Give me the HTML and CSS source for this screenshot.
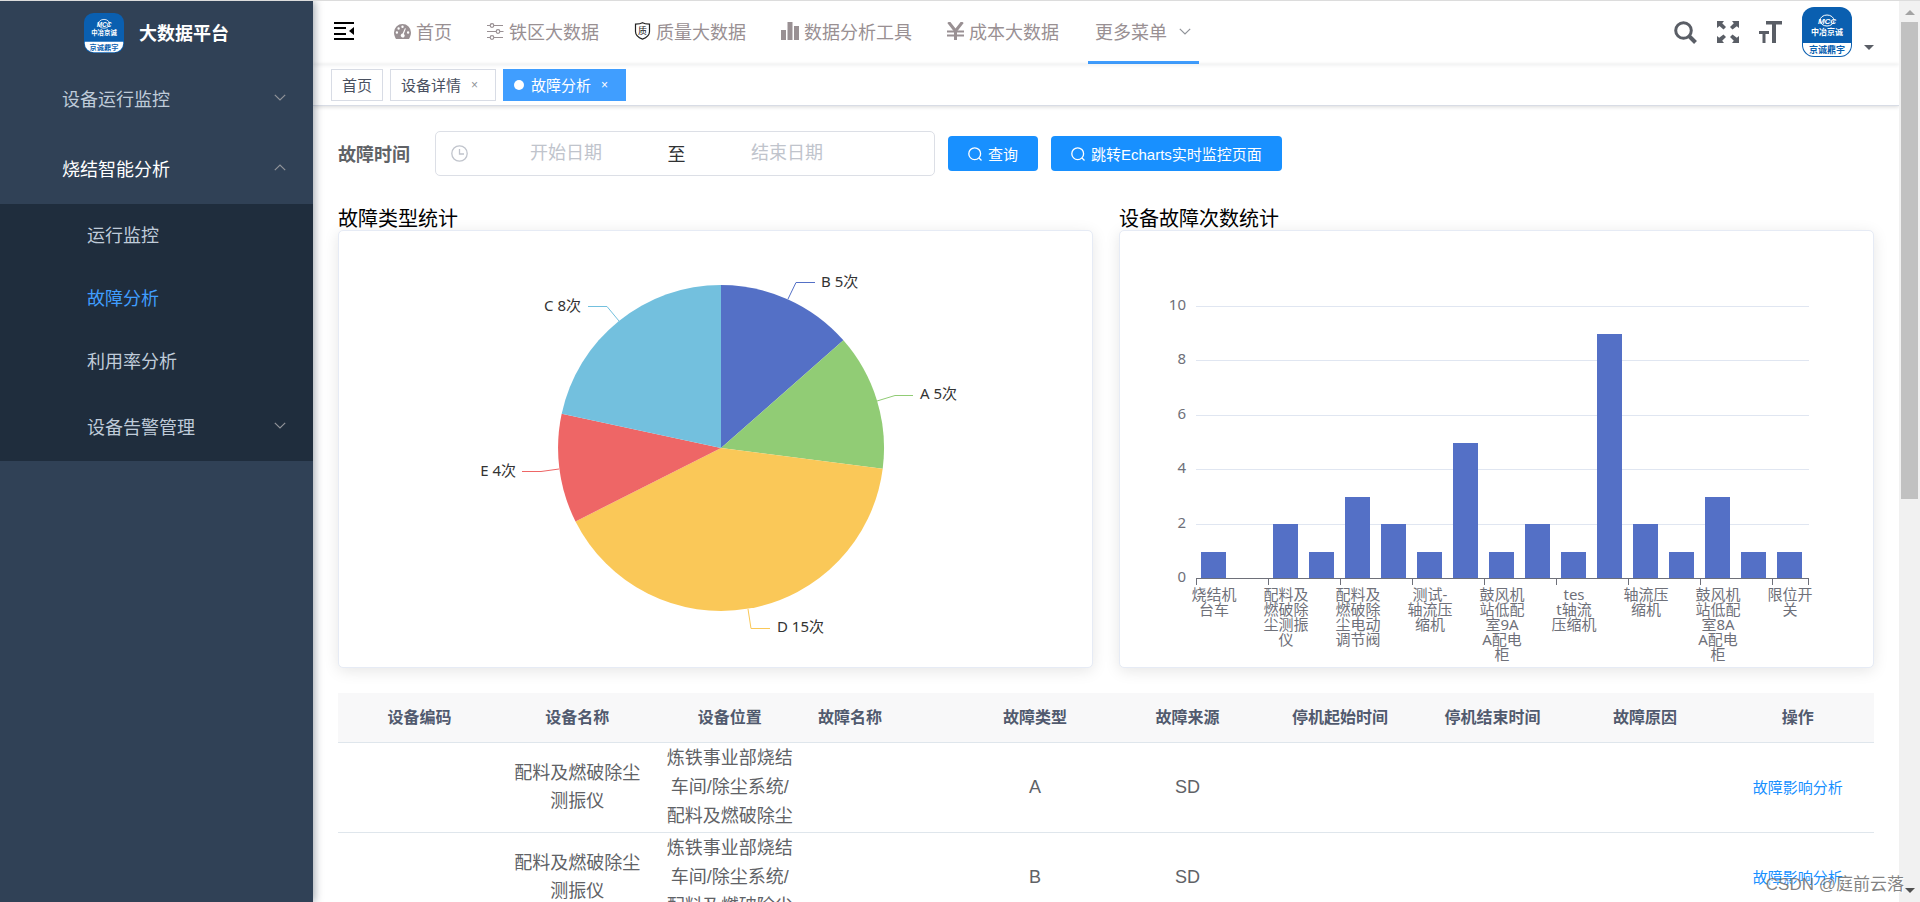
FILE: index.html
```html
<!DOCTYPE html>
<html lang="zh-CN">
<head>
<meta charset="utf-8">
<title>大数据平台</title>
<link rel="stylesheet" href="styles.css">
</head>
<body>
<svg class="defs" aria-hidden="true">
  <symbol id="brand" viewBox="0 0 50 50">
    <rect width="50" height="50" rx="12" fill="#0a5fb0"/>
    <path d="M1 36h48v2a11 11 0 0 1-11 11H12A11 11 0 0 1 1 38z" fill="#fff"/>
    <ellipse cx="25" cy="13.500" rx="7" ry="5.500" fill="none" stroke="#fff" stroke-width="1"/>
    <text class="brand-mcc" x="25" y="17" fill="#fff">MCC</text>
    <text class="brand-name" x="25" y="28" fill="#fff">中冶京诚</text>
    <text class="brand-sub" x="25" y="46" fill="#0a5fb0">京诚鼎宇</text>
  </symbol>
  <symbol id="down" viewBox="0 0 12 7"><path d="M.8.8 6 6 11.200.8" fill="none" stroke="currentColor" stroke-width="1.200"/></symbol>
  <symbol id="lens" viewBox="0 0 14 14"><circle cx="6.700" cy="6.700" r="5.900" fill="none" stroke="currentColor" stroke-width="1.300"/><path d="m11 11 2.500 2.500" stroke="currentColor" stroke-width="1.300"/></symbol>
</svg>
<div class="app">
  <aside class="sidebar">
    <div class="brand"><svg class="brand-logo"><use href="#brand"/></svg><h1 class="brand-title">大数据平台</h1></div>
    <nav>
      <button class="menu-title">设备运行监控<svg class="arrow"><use href="#down"/></svg></button>
      <button class="menu-title is-open">烧结智能分析<svg class="arrow up"><use href="#down"/></svg></button>
      <div class="submenu">
        <a class="menu-item" href="#">运行监控</a>
        <a class="menu-item is-active" href="#">故障分析</a>
        <a class="menu-item" href="#">利用率分析</a>
        <button class="menu-title nested">设备告警管理<svg class="arrow"><use href="#down"/></svg></button>
      </div>
    </nav>
  </aside>
  <div class="main">
    <header class="navbar">
      <button class="icon-button fold" aria-label="收起菜单">
        <svg width="20" height="18" viewBox="0 0 20 18"><path d="M0 1h20M0 6h12M0 12h12M0 17h20" stroke="#000" stroke-width="2"/><path d="M20 5v8l-5-4z"/></svg>
      </button>
      <nav class="topmenu">
        <a class="top-item" href="#"><svg width="17" height="15" viewBox="0 0 17 15"><path fill-rule="evenodd" fill="currentColor" d="M8.500 0A8.500 8.500 0 0 0 0 8.500c0 2.300.8 4.500 2 6.500h13c1.200-2 2-4.200 2-6.500A8.500 8.500 0 0 0 8.500 0zM2.900 7.300a1.200 1.200 0 1 1 0 2.400 1.200 1.200 0 0 1 0-2.400zM4.600 3.300a1.200 1.200 0 1 1 0 2.400 1.200 1.200 0 0 1 0-2.400zM8.500 1.600a1.200 1.200 0 1 1 0 2.400 1.200 1.200 0 0 1 0-2.400zM10.900 4.200l1 .4-2.100 5.300a2 2 0 1 1-1.200-.3zM14.100 7.300a1.200 1.200 0 1 1 0 2.400 1.200 1.200 0 0 1 0-2.400z"/></svg>首页</a>
        <a class="top-item" href="#"><svg width="17" height="17" viewBox="0 0 17 17" fill="none" stroke="currentColor" stroke-width="1.200"><path d="M0 2.500h3M7 2.500h9M0 8.500h9M13 8.500h3.500M0 14.500h3M7 14.500h9"/><circle cx="5" cy="2.500" r="1.800"/><circle cx="11" cy="8.500" r="1.800"/><circle cx="5" cy="14.500" r="1.800"/></svg>铁区大数据</a>
        <a class="top-item" href="#"><svg width="17" height="18" viewBox="0 0 17 18"><path d="M8.500.8c2 1.300 4.500 1.300 7 1.300v7.400c0 3.600-3.300 6.300-7 7.600-3.700-1.300-7-4-7-7.600V2.100c2.500 0 5 0 7-1.300z" fill="none" stroke="#222" stroke-width="1.200"/><text class="shield-text" x="8.500" y="12">质</text></svg>质量大数据</a>
        <a class="top-item" href="#"><svg width="18" height="18" viewBox="0 0 18 18" fill="currentColor"><path d="M0 8h5v10H0zM6.500 0h5v18h-5zM13 4h5v14h-5z"/></svg>数据分析工具</a>
        <a class="top-item" href="#"><svg width="17" height="18" viewBox="0 0 17 18" fill="none" stroke="currentColor"><path d="M1.500 0 8.500 9 15.500 0M8.500 8v10" stroke-width="3"/><path d="M0 9.500h17M0 13.500h17" stroke-width="2"/></svg>成本大数据</a>
        <button class="top-item more">更多菜单<svg class="arrow"><use href="#down"/></svg></button>
      </nav>
      <div class="tools">
        <button class="icon-button" aria-label="搜索"><svg width="23" height="23" viewBox="0 0 23 23" fill="none" stroke="#5a5e66"><circle cx="9.500" cy="9.500" r="7.800" stroke-width="3"/><path d="m15 15 6.500 6.500" stroke-width="4"/></svg></button>
        <button class="icon-button" aria-label="全屏"><svg width="22" height="22" viewBox="0 0 22 22"><path d="M0 0h7L5.200 2.200 9 6 6.500 8.500 2.500 5 0 7zM22 0v7l-2.200-1.800L15.500 8.500 13 6l3.800-3.800L15 0zM0 22v-7l2.200 1.800L6.500 13.500 9 16l-3.800 3.800L7 22zM22 22h-7l1.800-2.200L13 16l2.500-2.500 4.300 3.300L22 15z" fill="#5a5e66"/></svg></button>
        <button class="icon-button" aria-label="字号"><svg width="23" height="22" viewBox="0 0 23 22"><path d="M7 0h16v3.500h-6V22h-4V3.500H7zM0 10h10v3H6.500v9h-3v-9H0z" fill="#5a5e66"/></svg></button>
        <button class="user" aria-label="用户"><svg class="avatar"><use href="#brand"/></svg><span class="caret"></span></button>
      </div>
    </header>
    <div class="tags">
      <a class="tag" href="#">首页</a>
      <a class="tag closable" href="#">设备详情<span class="close">×</span></a>
      <a class="tag closable is-current" href="#"><span class="dot"></span>故障分析<span class="close">×</span></a>
    </div>
    <main class="content">
      <form class="filters">
        <label class="filter-label" for="start">故障时间</label>
        <div class="range">
          <svg width="17" height="17" viewBox="0 0 17 17" fill="none" stroke="#c0c4cc" stroke-width="1.300"><circle cx="8.500" cy="8.500" r="7.700"/><path d="M8.500 4v5H13"/></svg>
          <input class="range-input" id="start" type="text" placeholder="开始日期">
          <span class="range-sep">至</span>
          <input class="range-input" type="text" placeholder="结束日期" aria-label="结束日期">
        </div>
        <button class="primary" type="button"><svg width="14" height="14"><use href="#lens"/></svg>查询</button>
        <button class="primary" type="button"><svg width="14" height="14"><use href="#lens"/></svg>跳转Echarts实时监控页面</button>
      </form>
      <div class="charts">
        <section class="panel">
          <h2 class="panel-title">故障类型统计</h2>
          <div class="card">
            <svg class="chart" viewBox="0 0 753 436">
              <path fill="#5470c6" d="M382 217V54A163 163 0 0 1 504.400 109.300z"/>
              <path fill="#91cc75" d="M382 217 504.400 109.300A163 163 0 0 1 543.700 237.700z"/>
              <path fill="#fac858" d="M382 217 543.700 237.700A163 163 0 0 1 236.500 290.400z"/>
              <path fill="#ee6666" d="M382 217 236.500 290.400A163 163 0 0 1 222.700 182.700z"/>
              <path fill="#73c0de" d="M382 217 222.700 182.700A163 163 0 0 1 382 54z"/>
              <g fill="none">
                <path stroke="#5470c6" d="M449 68 457 51.500H476"/>
                <path stroke="#91cc75" d="M538 170 556 164.500H574"/>
                <path stroke="#fac858" d="M409 378 412 397.500H431"/>
                <path stroke="#ee6666" d="M220 238 202 240.500H183"/>
                <path stroke="#73c0de" d="M280 90 268 75.500H249"/>
              </g>
              <g class="pie-text">
                <text x="482" y="56">B 5次</text>
                <text x="581" y="168">A 5次</text>
                <text x="438" y="401">D 15次</text>
                <text class="end" x="177" y="245">E 4次</text>
                <text class="end" x="242" y="80">C 8次</text>
              </g>
            </svg>
          </div>
        </section>
        <section class="panel">
          <h2 class="panel-title">设备故障次数统计</h2>
          <div class="card">
            <svg class="chart" viewBox="0 0 753 436">
              <path stroke="#e0e6f1" d="M76 75.500H689M76 129.500H689M76 184.500H689M76 238.500H689M76 293.500H689"/>
              <path fill="#5470c6" d="M81 348v-27h25v27zM153 348v-55h25v55zM189 348v-27h25v27zM225 348v-82h25v82zM261 348v-55h25v55zM297 348v-27h25v27zM333 348v-136h25v136zM369 348v-27h25v27zM405 348v-55h25v55zM441 348v-27h25v27zM477 348v-245h25v245zM513 348v-55h25v55zM549 348v-27h25v27zM585 348v-82h25v82zM621 348v-27h25v27zM657 348v-27h25v27z"/>
              <path fill="none" stroke="#6e7079" d="M76 347.500H689M76.500 348v6M148.500 348v6M220.500 348v6M292.500 348v6M364.500 348v6M436.500 348v6M508.500 348v6M580.500 348v6M652.500 348v6M688.500 348v6"/>
              <g class="axis end">
                <text x="66" y="79">10</text><text x="66" y="133">8</text><text x="66" y="188">6</text><text x="66" y="242">4</text><text x="66" y="297">2</text><text x="66" y="351">0</text>
              </g>
              <g class="axis middle">
                <text><tspan x="94" y="369">烧结机</tspan><tspan x="94" y="384">台车</tspan></text>
                <text><tspan x="166" y="369">配料及</tspan><tspan x="166" y="384">燃破除</tspan><tspan x="166" y="399">尘测振</tspan><tspan x="166" y="414">仪</tspan></text>
                <text><tspan x="238" y="369">配料及</tspan><tspan x="238" y="384">燃破除</tspan><tspan x="238" y="399">尘电动</tspan><tspan x="238" y="414">调节阀</tspan></text>
                <text><tspan x="310" y="369">测试-</tspan><tspan x="310" y="384">轴流压</tspan><tspan x="310" y="399">缩机</tspan></text>
                <text><tspan x="382" y="369">鼓风机</tspan><tspan x="382" y="384">站低配</tspan><tspan x="382" y="399">室9A</tspan><tspan x="382" y="414">A配电</tspan><tspan x="382" y="429">柜</tspan></text>
                <text><tspan x="454" y="369">tes</tspan><tspan x="454" y="384">t轴流</tspan><tspan x="454" y="399">压缩机</tspan></text>
                <text><tspan x="526" y="369">轴流压</tspan><tspan x="526" y="384">缩机</tspan></text>
                <text><tspan x="598" y="369">鼓风机</tspan><tspan x="598" y="384">站低配</tspan><tspan x="598" y="399">室8A</tspan><tspan x="598" y="414">A配电</tspan><tspan x="598" y="429">柜</tspan></text>
                <text><tspan x="670" y="369">限位开</tspan><tspan x="670" y="384">关</tspan></text>
              </g>
            </svg>
          </div>
        </section>
      </div>
      <table class="faults">
        <thead>
          <tr><th class="col-code">设备编码</th><th>设备名称</th><th>设备位置</th><th class="left">故障名称</th><th>故障类型</th><th>故障来源</th><th>停机起始时间</th><th>停机结束时间</th><th>故障原因</th><th>操作</th></tr>
        </thead>
        <tbody>
          <tr><td></td><td class="name">配料及燃破除尘测振仪</td><td>炼铁事业部烧结车间/除尘系统/配料及燃破除尘</td><td></td><td>A</td><td>SD</td><td></td><td></td><td></td><td><a class="link" href="#">故障影响分析</a></td></tr>
          <tr><td></td><td class="name">配料及燃破除尘测振仪</td><td>炼铁事业部烧结车间/除尘系统/配料及燃破除尘</td><td></td><td>B</td><td>SD</td><td></td><td></td><td></td><td><a class="link" href="#">故障影响分析</a></td></tr>
        </tbody>
      </table>
    </main>
  </div>
  <div class="scrollbar"><span class="scroll-arrow top"></span><span class="thumb"></span><span class="scroll-arrow bottom"></span></div>
  <div class="watermark">CSDN @庭前云落</div>
</div>
</body>
</html>
```

FILE: styles.css
```css
* { box-sizing: border-box; }
body {
  margin: 0;
  font-family: "Liberation Sans", "Noto Sans CJK SC", sans-serif;
  font-size: 18px;
  color: #606266;
  background: #fff;
}
a { color: inherit; text-decoration: none; }
button { font: inherit; color: inherit; background: none; border: 0; padding: 0; cursor: pointer; }
svg { flex: none; }
.defs { position: absolute; width: 0; height: 0; }
.app {
  position: relative;
  display: flex;
  height: 100vh;
  overflow: hidden;
  border-top: 1px solid #dcdcdc;
}

/* sidebar */
.sidebar {
  flex: none;
  width: 313px;
  background: #304156;
  color: #bfcbd9;
  box-shadow: 2px 0 8px rgba(0, 21, 41, .35);
  z-index: 2;
}
.brand { display: flex; align-items: center; justify-content: center; gap: 15px; height: 63px; }
.brand-logo { width: 40px; height: 40px; }
.brand-title { margin: 0; padding-bottom: 2px; font-size: 18px; font-weight: 700; color: #fff; }
.brand-mcc { font: italic 700 8px "Liberation Sans", sans-serif; text-anchor: middle; }
.brand-name { font: 700 8px "Noto Sans CJK SC", sans-serif; text-anchor: middle; }
.brand-sub { font: 700 9px "Noto Sans CJK SC", sans-serif; text-anchor: middle; }
.menu-title {
  display: flex;
  align-items: center;
  justify-content: space-between;
  width: 100%;
  height: 70px;
  padding: 0 27px 3px 62px;
}
.is-open { color: #fff; }
.submenu { background: #1f2d3d; }
.menu-item { display: flex; align-items: center; height: 63px; padding: 0 0 4px 87px; }
.is-active { color: #409eff; }
.nested { height: 68px; padding-left: 87px; }
.arrow { width: 12px; height: 7px; color: #909399; }
.up { transform: rotate(180deg); }

/* top bar */
.main { flex: 1; min-width: 0; display: flex; flex-direction: column; }
.navbar {
  flex: none;
  display: flex;
  align-items: center;
  height: 63px;
  padding: 0 25px 0 21px;
  box-shadow: 0 1px 4px rgba(0, 21, 41, .08);
}
.icon-button { display: flex; }
.fold { margin: 0 40px 3px 0; }
.topmenu { display: flex; align-self: stretch; gap: 35px; color: #999093; }
.top-item { display: flex; align-items: center; gap: 5px; padding-bottom: 3px; white-space: nowrap; }
.more { gap: 12px; margin-left: -6px; padding: 0 8px 0 7px; border-bottom: 3px solid #409eff; }
.shield-text { font: 9px "Noto Sans CJK SC", sans-serif; fill: #222; text-anchor: middle; }
.tools { display: flex; align-items: center; gap: 20px; margin-left: auto; padding-bottom: 1px; }
.user { display: flex; align-items: flex-end; gap: 12px; }
.avatar { width: 50px; height: 50px; }
.caret { margin-bottom: 7px; border: 5px solid transparent; border-top-color: #5a5e66; border-bottom: 0; }

/* tags */
.tags {
  flex: none;
  display: flex;
  align-items: center;
  gap: 7px;
  height: 42px;
  padding-left: 18px;
  border-bottom: 1px solid #d8dce5;
  box-shadow: 0 1px 4px rgba(0, 0, 0, .15);
}
.tag {
  display: flex;
  align-items: center;
  height: 32px;
  padding: 0 10px;
  border: 1px solid #d8dce5;
  font-size: 15px;
  color: #495060;
}
.closable { padding-right: 17px; }
.close { margin-left: 10px; font-size: 12px; color: #909399; }
.dot { width: 10px; height: 10px; margin-right: 7px; border-radius: 50%; background: #fff; }
.is-current { background: #409eff; border-color: #409eff; color: #fff; }
.is-current .close { color: #fff; }

/* content */
.content { flex: 1; min-height: 0; overflow: hidden; padding: 25px 25px 0; }
.filters { display: flex; align-items: center; gap: 13px; }
.filter-label { width: 84px; padding-bottom: 2px; font-weight: 700; }
.range {
  display: flex;
  align-items: center;
  width: 500px;
  height: 45px;
  padding: 0 15px;
  border: 1px solid #dcdfe6;
  border-radius: 5px;
}
.range-input {
  width: 196px;
  padding: 0;
  border: 0;
  outline: 0;
  font: inherit;
  text-align: center;
  background: none;
}
.range-input::placeholder { color: #c0c4cc; }
.range-sep { width: 25px; padding-bottom: 2px; text-align: center; color: #303133; }
.primary {
  display: flex;
  align-items: center;
  gap: 6px;
  height: 35px;
  padding: 0 20px;
  border-radius: 4px;
  background: #1890ff;
  color: #fff;
  font-size: 15px;
}
.charts { display: grid; grid-template-columns: 1fr 1fr; gap: 26px; margin-top: 32px; }
.panel-title { margin: 0; font-size: 20px; line-height: 22px; font-weight: 400; color: #000; }
.card {
  border: 1px solid #e6ebf5;
  border-radius: 5px;
  box-shadow: 0 3px 15px rgba(0, 0, 0, .1);
  background: #fff;
}
.chart { display: block; width: 100%; height: auto; }
.pie-text { font: 15px "Noto Sans", "Noto Sans CJK SC", sans-serif; fill: #333; }
.axis { font: 15px "Noto Sans", "Noto Sans CJK SC", sans-serif; fill: #6e7079; }
.end { text-anchor: end; }
.middle { text-anchor: middle; }

/* table */
.faults { width: 100%; margin-top: 25px; table-layout: fixed; border-collapse: collapse; }
.faults th {
  height: 49px;
  padding: 0 12px 2px;
  border-bottom: 1px solid #dfe6ec;
  background: #f8f8f9;
  color: #515a6e;
  font-size: 16px;
}
.faults .col-code { width: 163px; }
.faults .left { text-align: left; }
.faults td {
  height: 90px;
  padding: 1px 12px;
  border-bottom: 1px solid #dfe6ec;
  line-height: 29px;
  text-align: center;
}
.faults .name { line-height: 28px; }
.link { font-size: 15px; color: #1890ff; }

/* window scrollbar */
.scrollbar {
  flex: none;
  display: flex;
  flex-direction: column;
  align-items: center;
  width: 21px;
  padding: 9px 0;
  background: #f1f1f1;
}
.scroll-arrow { border: 5px solid transparent; }
.top { border-top: 0; border-bottom-color: #a3a3a3; }
.bottom { margin-top: auto; border-bottom: 0; border-top-color: #505050; }
.thumb { width: 17px; height: 54%; margin-top: 7px; background: #c1c1c1; }
.watermark {
  position: absolute;
  right: 16px;
  bottom: 7px;
  font-size: 17px;
  color: rgba(90, 90, 90, .75);
  text-shadow: 1px 1px 1px #fff;
}
```
